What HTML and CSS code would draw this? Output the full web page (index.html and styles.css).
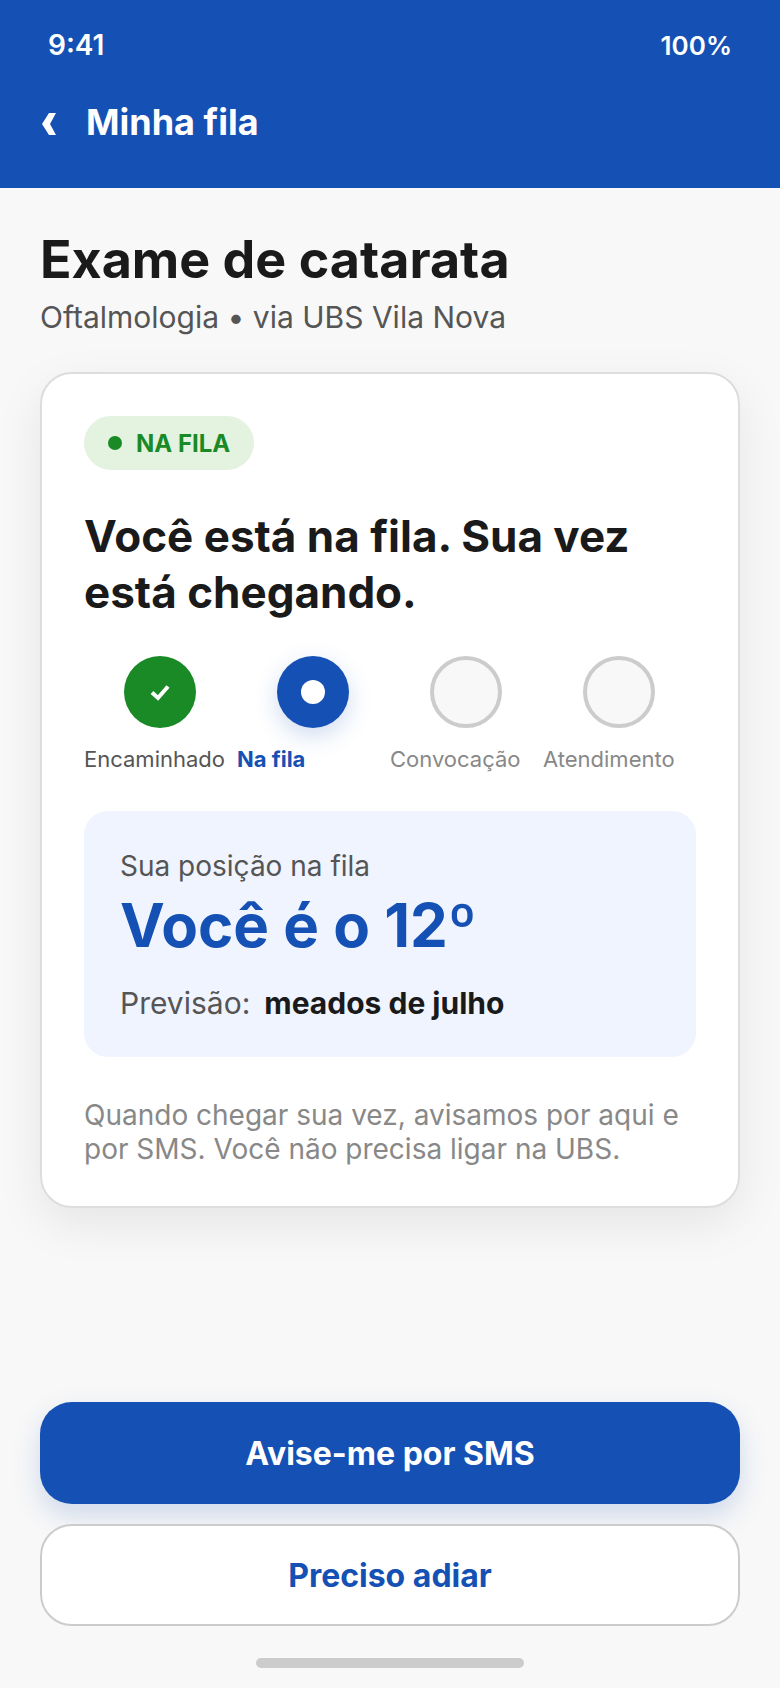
FILE: index.html
```html
<!DOCTYPE html>
<html lang="pt-BR">
<head>
    <meta charset="UTF-8">
    <meta name="viewport" content="width=device-width, initial-scale=1.0">
    <title>Minha fila</title>
    <link rel="stylesheet" href="styles.css">
</head>
<body>
    <div class="app">
        <header class="topo">
            <div class="status">
                <span class="hora">9:41</span>
                <span>100%</span>
            </div>
            <div class="barra">
                <svg class="voltar" width="18" height="26" viewBox="0 0 18 26"><path d="M9 2 L2 13 L9 24 L16 24 L10 13 L16 2 Z" fill="#fff"/></svg>
                <span class="barra-titulo">Minha fila</span>
            </div>
        </header>

        <main class="conteudo">
            <h1 class="titulo">Exame de catarata</h1>
            <p class="subtitulo">Oftalmologia • via UBS Vila Nova</p>

            <section class="card">
                <div class="selo"><span class="selo-ponto"></span>NA FILA</div>
                <h2 class="mensagem">Você está na fila. Sua vez está chegando.</h2>

                <div class="etapas">
                    <div class="etapa">
                        <div class="circulo feito">
                            <svg width="24" height="24" viewBox="0 0 24 24"><path d="M4 12.5 L10 18 L20 6.5" fill="none" stroke="#fff" stroke-width="4"/></svg>
                        </div>
                        <span class="etapa-nome">Encaminhado</span>
                    </div>
                    <div class="etapa">
                        <div class="circulo atual"><span class="miolo"></span></div>
                        <span class="etapa-nome ativo">Na fila</span>
                    </div>
                    <div class="etapa">
                        <div class="circulo"></div>
                        <span class="etapa-nome futuro">Convocação</span>
                    </div>
                    <div class="etapa">
                        <div class="circulo"></div>
                        <span class="etapa-nome futuro">Atendimento</span>
                    </div>
                </div>

                <div class="posicao">
                    <div class="posicao-rotulo">Sua posição na fila</div>
                    <div class="posicao-valor">Você é o 12º</div>
                    <div class="previsao">
                        <span>Previsão:</span>
                        <strong>meados de julho</strong>
                    </div>
                </div>

                <p class="aviso">Quando chegar sua vez, avisamos por aqui e por SMS. Você não precisa ligar na UBS.</p>
            </section>

            <div class="acoes">
                <button class="botao primario">Avise-me por SMS</button>
                <button class="botao secundario">Preciso adiar</button>
            </div>
        </main>

        <div class="home"><span class="home-barra"></span></div>
    </div>
</body>
</html>
```

FILE: styles.css
```css
* {
    box-sizing: border-box;
}
body {
    margin: 0;
    background-color: #f8f8f8;
    font-family: Inter, "Liberation Sans", sans-serif;
    color: #1a1a1a;
}
.app {
    width: 780px;
    height: 1688px;
    display: flex;
    flex-direction: column;
    overflow: hidden;
}
.topo {
    height: 188px;
    background-color: #1551b4;
    color: white;
    padding: 29px 48px 0 40px;
}
.status {
    display: flex;
    justify-content: space-between;
    align-items: baseline;
    padding-left: 8px;
    font-size: 26px;
    line-height: 32px;
    font-weight: 600;
}
.hora {
    font-size: 28px;
}
.barra {
    display: flex;
    align-items: center;
    gap: 28px;
    margin-top: 36px;
    height: 48px;
}
.voltar {
    display: block;
    margin-top: 4px;
}
.barra-titulo {
    font-size: 36px;
    font-weight: 700;
    line-height: 48px;
}
.conteudo {
    flex: 1;
    padding: 40px 40px 0;
    display: flex;
    flex-direction: column;
}
.titulo {
    margin: 0;
    font-size: 52px;
    line-height: 64px;
    font-weight: 700;
}
.subtitulo {
    margin: 6px 0 0;
    font-size: 30px;
    line-height: 38px;
    color: #555;
}
.card {
    margin-top: 36px;
    height: 836px;
    background-color: white;
    border: 2px solid #ddd;
    border-radius: 32px;
    padding: 42px;
    box-shadow: 0 16px 48px rgba(0, 0, 0, 0.08);
}
.selo {
    display: inline-flex;
    align-items: center;
    gap: 14px;
    height: 54px;
    padding: 0 24px;
    border-radius: 27px;
    background-color: #e3f3df;
    color: #1a8a26;
    font-size: 24px;
    font-weight: 700;
}
.selo-ponto {
    width: 14px;
    height: 14px;
    border-radius: 50%;
    background-color: #1a8a26;
}
.mensagem {
    margin: 38px 0 0;
    font-size: 44px;
    line-height: 56px;
    font-weight: 700;
}
.etapas {
    display: grid;
    grid-template-columns: repeat(4, 153px);
    margin-top: 36px;
}
.etapa {
    display: flex;
    flex-direction: column;
}
.circulo {
    width: 72px;
    height: 72px;
    margin-left: 40px;
    border-radius: 50%;
    border: 4px solid #ccc;
    background-color: #f8f8f8;
    display: flex;
    align-items: center;
    justify-content: center;
}
.circulo.feito {
    background-color: #1a8a26;
    border: none;
}
.circulo.atual {
    background-color: #1551b4;
    border: none;
    box-shadow: 0 8px 24px rgba(21, 81, 180, 0.2);
}
.miolo {
    width: 24px;
    height: 24px;
    border-radius: 50%;
    background-color: white;
}
.etapa-nome {
    margin-top: 16px;
    font-size: 22px;
    line-height: 30px;
    color: #555;
    white-space: nowrap;
}
.etapa-nome.ativo {
    color: #1551b4;
    font-weight: 700;
}
.etapa-nome.futuro {
    color: #888;
}
.posicao {
    margin-top: 37px;
    height: 246px;
    background-color: #f0f4fe;
    border-radius: 24px;
    padding: 37px 36px 0;
}
.posicao-rotulo {
    font-size: 28px;
    line-height: 36px;
    color: #555;
}
.posicao-valor {
    margin-top: 5px;
    font-size: 60px;
    line-height: 72px;
    font-weight: 700;
    color: #1551b4;
}
.previsao {
    display: flex;
    gap: 14px;
    margin-top: 23px;
    font-size: 30px;
    line-height: 38px;
    color: #555;
}
.previsao strong {
    color: #1a1a1a;
    font-weight: 700;
}
.aviso {
    margin: 41px 0 0;
    font-size: 28px;
    line-height: 34px;
    color: #888;
}
.acoes {
    margin-top: auto;
    display: flex;
    flex-direction: column;
    gap: 20px;
}
.botao {
    height: 102px;
    border-radius: 32px;
    font-family: inherit;
    font-size: 32px;
    font-weight: 700;
}
.primario {
    background-color: #1551b4;
    color: white;
    border: none;
    box-shadow: 0 12px 28px rgba(21, 81, 180, 0.18);
}
.secundario {
    background-color: white;
    color: #1551b4;
    border: 2px solid #ccc;
}
.home {
    height: 62px;
    padding-top: 32px;
    display: flex;
    justify-content: center;
}
.home-barra {
    width: 268px;
    height: 10px;
    border-radius: 5px;
    background-color: #cccccc;
}
```
